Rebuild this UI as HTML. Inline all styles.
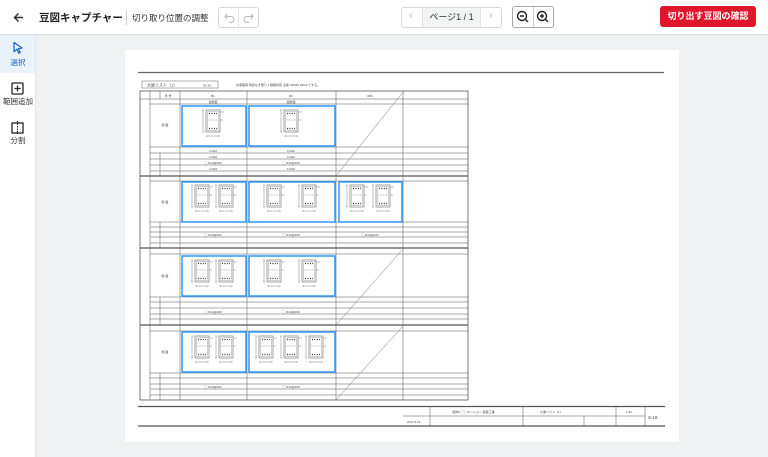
<!DOCTYPE html>
<html><head><meta charset="utf-8"><style>
*{margin:0;padding:0;box-sizing:border-box}
body{width:768px;height:457px;overflow:hidden;background:#f0f1f3;font-family:"Liberation Sans","Noto Sans CJK JP",sans-serif;position:relative}
.hdr{position:absolute;left:0;top:0;width:768px;height:35px;background:#fff;border-bottom:1px solid #dcdee2}
.abs{position:absolute;white-space:nowrap}
.side{position:absolute;left:0;top:35px;width:36px;height:422px;background:#fff;border-right:1px solid #e2e4e8}
.lbl{position:absolute;left:0;width:36px;text-align:center;font-size:7.5px;color:#333}
.btn{position:absolute;border:1px solid #d8dade;border-radius:3px;background:#fff}
</style></head><body>
<div class="hdr">
 <svg class="abs" style="left:12px;top:11px" width="13" height="13" viewBox="0 0 13 13"><path d="M11 6.5H2.5M6.5 2.5L2.5 6.5L6.5 10.5" stroke="#333" stroke-width="1.5" fill="none"/></svg>
 <div class="abs" style="left:39px;top:10px;font-size:10.5px;font-weight:bold;color:#222">豆図キャプチャー</div>
 <div class="abs" style="left:126px;top:10px;width:1px;height:15px;background:#ccc"></div>
 <div class="abs" style="left:132px;top:12px;font-size:8.5px;color:#333">切り取り位置の調整</div>
 <div class="btn" style="left:218px;top:7px;width:41px;height:21px"></div>
 <div class="abs" style="left:238px;top:8px;width:1px;height:19px;background:#e0e0e0"></div>
 <svg class="abs" style="left:222px;top:11px" width="34" height="12"><path d="M5 3L3 5.5L5 8M3 5.5H9a3 3 0 0 1 0 6H7" stroke="#bbb" stroke-width="1.1" fill="none"/><path d="M29 3L31 5.5L29 8M31 5.5H25a3 3 0 0 0 0 6H27" stroke="#bbb" stroke-width="1.1" fill="none"/></svg>
 <div class="btn" style="left:401px;top:7px;width:101px;height:21px"></div>
 <div class="abs" style="left:422px;top:8px;width:59px;height:19px;background:#f3f4f6;border-left:1px solid #e3e3e3;border-right:1px solid #e3e3e3;font-size:9px;color:#333;text-align:center;line-height:19px">ページ1 / 1</div>
 <div class="abs" style="left:409px;top:10px;font-size:11px;color:#bbb">‹</div>
 <div class="abs" style="left:489px;top:10px;font-size:11px;color:#bbb">›</div>
 <div class="btn" style="left:512px;top:6px;width:42px;height:22px;border-color:#aaa"></div>
 <div class="abs" style="left:533px;top:7px;width:1px;height:20px;background:#ccc"></div>
 <svg class="abs" style="left:515px;top:9px" width="36" height="16"><circle cx="7" cy="7" r="4.5" stroke="#222" stroke-width="1.4" fill="none"/><path d="M10.3 10.3L13 13M5 7H9" stroke="#222" stroke-width="1.4"/><circle cx="27" cy="7" r="4.5" stroke="#222" stroke-width="1.4" fill="none"/><path d="M30.3 10.3L33 13M25 7H29M27 5V9" stroke="#222" stroke-width="1.4"/></svg>
 <div class="abs" style="left:660px;top:6px;width:96px;height:21px;background:#e0162b;border-radius:3px;color:#fff;font-size:9px;font-weight:bold;text-align:center;line-height:21px">切り出す豆図の確認</div>
</div>
<div class="side">
 <div class="abs" style="left:0;top:0;width:35px;height:38px;background:#e9f2fd"></div>
 <svg class="abs" style="left:12px;top:6px" width="12" height="13"><path d="M2 1.5L10 7L6.3 7.6L8.3 11.5L6.8 12.2L4.8 8.3L2 10.6Z" stroke="#1a5fd6" stroke-width="1.2" fill="none" stroke-linejoin="round"/></svg>
 <div class="lbl" style="top:22px;color:#1a5fd6">選択</div>
 <svg class="abs" style="left:11px;top:47px" width="13" height="13"><rect x="1" y="1" width="11" height="11" rx="1" stroke="#222" stroke-width="1.3" fill="none"/><path d="M6.5 3.5V9.5M3.5 6.5H9.5" stroke="#222" stroke-width="1.3"/></svg>
 <div class="lbl" style="top:61px">範囲追加</div>
 <svg class="abs" style="left:11px;top:86px" width="13" height="13"><rect x="1" y="2" width="11" height="10" stroke="#222" stroke-width="1.3" fill="none"/><path d="M6.5 0V13" stroke="#222" stroke-width="1.1" stroke-dasharray="1.5 1"/></svg>
 <div class="lbl" style="top:100px">分割</div>
</div>
<svg class="abs" style="left:125px;top:50px" width="554" height="392" viewBox="125 50 554 392" font-family="Liberation Sans,Noto Sans CJK JP,sans-serif" font-size="3" fill="#444">
<defs>
<g id="bm"><rect x="0" y="0" width="14" height="22" stroke="#666" stroke-width=".6" fill="none"/><rect x="1.5" y="1.5" width="11" height="19" stroke="#888" stroke-width=".4" fill="none"/><path d="M3 3.5h8M3 18.5h8" stroke="#333" stroke-width="1.2" stroke-dasharray="1 1.4"/><path d="M2 10h10" stroke="#666" stroke-width=".4" stroke-dasharray="1 .6"/><path d="M14 2h4M14 10h3M-3 0v22M-4 0h2M-4 22h2M1 26h12M1 25v2M13 25v2" stroke="#666" stroke-width=".4"/></g>
</defs>
<rect x="125" y="50" width="554" height="392" fill="#fff"/>
<path d="M138 72.5H664" stroke="#666" stroke-width="1.3"/>
<rect x="142" y="81" width="76" height="7" fill="none" stroke="#666" stroke-width=".5"/>
<text x="147" y="86.5" font-size="4">大梁リスト（1）</text><text x="203" y="86.5">S1:30</text>
<text x="236" y="86">共通事項 特記なき限り 1.鉄筋材質 主筋 SD345 HD10 とする。</text>
<g stroke="#555" stroke-width=".5" fill="none">
<rect x="140" y="91" width="328" height="309" stroke-width=".8"/>
<path d="M140 99H468M150 91V400M160 91V99M180 91V400M247 91V400M336 91V400M403 91V400"/>
<path d="M140 176H468M140 248H468M140 325H468" stroke-width="1.2"/>
<path d="M150 104H468M150 147H468M150 153H468M150 159H468M150 165H468M150 171H468"/>
<path d="M150 181H468M150 222H468M150 227H468M150 232H468M150 237H468M150 243H468"/>
<path d="M150 254H468M150 297H468M150 302H468M150 308H468M150 314H468M150 319H468"/>
<path d="M150 331H468M150 373H468M150 378H468M150 384H468M150 389H468M150 395H468"/>
<path d="M160 153V176M160 222V248M160 297V325M160 373V400"/>
<path d="M336 176L403 92M336 325L403 249M336 400L403 326" stroke="#777"/>
</g>
<g text-anchor="middle"><text x="213" y="97">B1</text><text x="291" y="97">B2</text><text x="370" y="97">CB1</text><text x="168" y="97">符 号</text>
<text x="213" y="103">全断面</text><text x="291" y="103">全断面</text>
<text x="165" y="126">断 面</text><text x="165" y="203">断 面</text><text x="165" y="277">断 面</text><text x="165" y="353">断 面</text>
<text x="213" y="152">4-D22</text><text x="291" y="152">4-D22</text><text x="213" y="158">4-D22</text><text x="291" y="158">4-D22</text>
<text x="213" y="164">◯ D10@200</text><text x="291" y="164">◯ D10@200</text><text x="213" y="170">2-D10</text><text x="291" y="170">2-D10</text>
<text x="213" y="236">◯ D10@200</text><text x="291" y="236">◯ D10@200</text><text x="370" y="236">◯ D10@200</text>
<text x="213" y="313">◯ D10@200</text><text x="291" y="313">◯ D10@200</text>
<text x="213" y="388">◯ D10@200</text><text x="291" y="388">◯ D10@200</text>
</g>
<g stroke="#1e90ff" stroke-width="1.4" fill="none">
<rect x="182" y="106" width="64" height="40"/><rect x="249" y="106" width="86" height="40"/>
<rect x="182" y="182" width="64" height="40"/><rect x="249" y="182" width="86" height="40"/><rect x="339" y="182" width="63" height="40"/>
<rect x="182" y="256" width="64" height="40"/><rect x="249" y="256" width="86" height="40"/>
<rect x="182" y="332" width="64" height="40"/><rect x="249" y="332" width="86" height="40"/>
</g>
<use href="#bm" x="206" y="110"/><use href="#bm" x="284" y="110"/>
<use href="#bm" x="195" y="185"/><use href="#bm" x="219" y="185"/><use href="#bm" x="267" y="185"/><use href="#bm" x="302" y="185"/><use href="#bm" x="350" y="185"/><use href="#bm" x="376" y="185"/>
<use href="#bm" x="195" y="260"/><use href="#bm" x="219" y="260"/><use href="#bm" x="267" y="260"/><use href="#bm" x="302" y="260"/>
<use href="#bm" x="195" y="336"/><use href="#bm" x="219" y="336"/><use href="#bm" x="259" y="336"/><use href="#bm" x="284" y="336"/><use href="#bm" x="309" y="336"/>
<g stroke="#555" fill="none">
<path d="M138 406.5H665M138 426H665" stroke-width="1.2"/>
<path d="M430 407V426M523 407V426M584 416V426M616 407V426M645 407V426M403 416H645" stroke-width=".5"/>
</g>
<text x="452" y="413">(仮称) ◯◯マンション 新築工事</text><text x="540" y="413">大梁リスト（1）</text><text x="626" y="413">1:30</text>
<text x="648" y="419" font-size="4.5">S-18</text><text x="407" y="423">2017.6.13</text>
</svg>
</body></html>
